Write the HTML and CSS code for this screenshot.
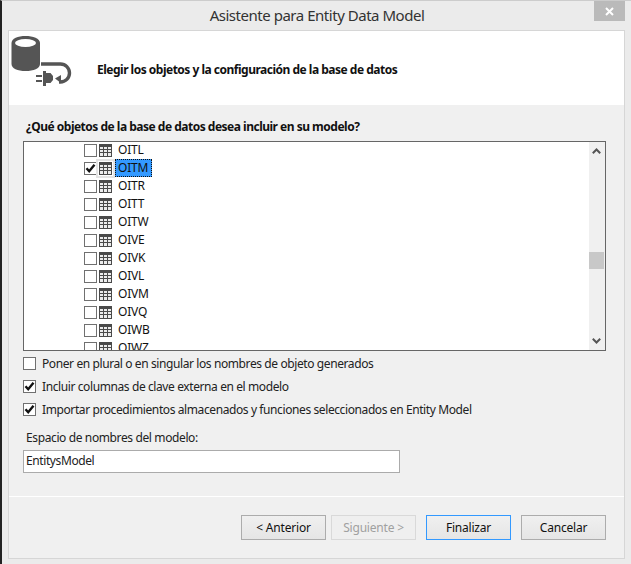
FILE: index.html
```html
<!DOCTYPE html>
<html lang="es">
<head>
<meta charset="utf-8">
<title>Asistente para Entity Data Model</title>
<link rel="stylesheet" href="styles.css">
</head>
<body>
<svg class="defs" width="0" height="0" aria-hidden="true">
  <symbol id="tbl" viewBox="0 0 13 13">
    <rect x="0" y="0" width="13" height="13" fill="#4a4a4a"/>
    <path d="M1 3h3v2H1zM5 3h3v2H5zM9 3h3v2H9zM1 6h3v2H1zM5 6h3v2H5zM9 6h3v2H9zM1 9h3v3H1zM5 9h3v3H5zM9 9h3v3H9z" fill="#ececec"/>
  </symbol>
  <symbol id="tick" viewBox="0 0 11 11">
    <path d="M1.500 5.200 4.200 8.200 9.500 1.800" fill="none" stroke="#111" stroke-width="2.400"/>
  </symbol>
</svg>
<div class="window">
  <div class="titlebar">
    <span class="title">Asistente para Entity Data Model</span>
    <div class="close"><svg width="9" height="9" viewBox="0 0 9 9"><path d="M1 1l7 7M8 1L1 8" stroke="#fff" stroke-width="2"/></svg></div>
  </div>
  <div class="frame">
    <div class="header">
      <svg class="logo" width="66" height="54" viewBox="0 0 66 54">
        <path d="M2.500 7C2.500 2.500 9 0 16.500 0S31 2.500 31 7v21c0 4.500-6.500 7-14.500 7S2.500 32.500 2.500 28z" fill="#555"/>
        <ellipse cx="16.500" cy="7" rx="10.500" ry="4" fill="#fff"/>
        <path d="M32 28h19.500a9 9 0 0 1 0 18H50" fill="none" stroke="#555" stroke-width="3.400"/>
        <path d="M46 42.500l6-3.500v8z" fill="#555"/>
        <path d="M34 35h3v2h4.500l2.500 3v4l-2.500 3H37v3h-3z" fill="#555"/>
        <path d="M27 39h6v2h-6zM27 44h6v2h-6z" fill="#555"/>
      </svg>
      <h1 class="heading">Elegir los objetos y la configuración de la base de datos</h1>
    </div>
    <div class="content">
      <p class="question">¿Qué objetos de la base de datos desea incluir en su modelo?</p>
      <div class="listbox">
        <ul class="tree">
          <li class="row"><span class="cb"></span><svg class="ti"><use href="#tbl"/></svg><span class="name">OITL</span></li>
          <li class="row"><span class="cb"><svg class="tk"><use href="#tick"/></svg></span><span class="ti-focus"><svg class="ti"><use href="#tbl"/></svg></span><span class="name selected">OITM</span></li>
          <li class="row"><span class="cb"></span><svg class="ti"><use href="#tbl"/></svg><span class="name">OITR</span></li>
          <li class="row"><span class="cb"></span><svg class="ti"><use href="#tbl"/></svg><span class="name">OITT</span></li>
          <li class="row"><span class="cb"></span><svg class="ti"><use href="#tbl"/></svg><span class="name">OITW</span></li>
          <li class="row"><span class="cb"></span><svg class="ti"><use href="#tbl"/></svg><span class="name">OIVE</span></li>
          <li class="row"><span class="cb"></span><svg class="ti"><use href="#tbl"/></svg><span class="name">OIVK</span></li>
          <li class="row"><span class="cb"></span><svg class="ti"><use href="#tbl"/></svg><span class="name">OIVL</span></li>
          <li class="row"><span class="cb"></span><svg class="ti"><use href="#tbl"/></svg><span class="name">OIVM</span></li>
          <li class="row"><span class="cb"></span><svg class="ti"><use href="#tbl"/></svg><span class="name">OIVQ</span></li>
          <li class="row"><span class="cb"></span><svg class="ti"><use href="#tbl"/></svg><span class="name">OIWB</span></li>
          <li class="row"><span class="cb"></span><svg class="ti"><use href="#tbl"/></svg><span class="name">OIWZ</span></li>
        </ul>
        <div class="scrollbar">
          <svg class="arrow-up" width="9" height="6" viewBox="0 0 9 6"><path d="M.8 5.200 4.500 1.500 8.200 5.200" fill="none" stroke="#555" stroke-width="2"/></svg>
          <div class="thumb"></div>
          <svg class="arrow-down" width="9" height="6" viewBox="0 0 9 6"><path d="M.8.800 4.500 4.500 8.200.800" fill="none" stroke="#555" stroke-width="2"/></svg>
        </div>
      </div>
      <div class="options">
        <div class="opt"><span class="box"></span><span>Poner en plural o en singular los nombres de objeto generados</span></div>
        <div class="opt"><span class="box"><svg class="tk"><use href="#tick"/></svg></span><span>Incluir columnas de clave externa en el modelo</span></div>
        <div class="opt"><span class="box"><svg class="tk"><use href="#tick"/></svg></span><span>Importar procedimientos almacenados y funciones seleccionados en Entity Model</span></div>
      </div>
      <p class="ns-label">Espacio de nombres del modelo:</p>
      <div class="input">EntitysModel</div>
    </div>
    <div class="footer">
      <div class="btn">&lt; Anterior</div>
      <div class="btn disabled">Siguiente &gt;</div>
      <div class="btn primary">Finalizar</div>
      <div class="btn">Cancelar</div>
    </div>
  </div>
</div>
</body>
</html>
```
FILE: styles.css
```css
* { box-sizing: border-box; }
html, body { margin: 0; padding: 0; }
body { font-family: "Noto Sans", "Open Sans", sans-serif; font-size: 12px; color: #111; overflow: hidden; }
.defs { position: absolute; }
.window {
  width: 631px; height: 564px; background: #ebebeb;
  border-left: 2px solid #222; border-top: 1px solid #ccc;
  display: flex; flex-direction: column; position: relative;
}
.titlebar { height: 29px; flex: none; display: flex; align-items: center; justify-content: center; padding-left: 1px; padding-bottom: 1px; }
.title { font-size: 15px; color: #333; letter-spacing: -.47px; }
.close {
  position: absolute; top: 0; left: 592px; width: 31px; height: 20px;
  background: #bababa; display: flex; align-items: center; justify-content: center;
}
.frame {
  flex: 1; margin: 0 6px 5px 6px; border: 1px solid #d6d6d6; background: #f0f0f0;
  display: flex; flex-direction: column;
}
.header { height: 74px; flex: none; background: #fff; display: flex; align-items: flex-start; position: relative; }
.logo { position: absolute; left: 0; top: 5px; }
.heading { margin: 31px 0 0 88px; font-size: 12px; font-weight: 700; line-height: 16px; color: #111; letter-spacing: -.5px; }
.content { padding: 0 14px; display: flex; flex-direction: column; align-items: flex-start; }
.question { margin: 14px 0 0 3px; height: 22px; line-height: 16px; font-weight: 700; letter-spacing: -.5px; }
.listbox {
  width: 583px; height: 210px; background: #fff; border: 1px solid #666;
  display: flex; overflow: hidden; flex: none;
}
.tree { list-style: none; margin: -1px 0 0 0; padding: 0 0 0 60px; flex: 1; min-width: 0; }
.row { height: 18px; display: flex; align-items: center; }
.cb {
  width: 13px; height: 13px; border: 1px solid #707070; background: #fff; flex: none;
  margin-right: 2px; display: flex;
}
.ti { width: 13px; height: 13px; flex: none; display: block; }
.ti-focus { display: flex; flex: none; outline: 2px solid #e4e4e4; outline-offset: 1px; }
.tk { width: 11px; height: 11px; display: block; }
.name { margin-left: 3px; padding: 0 3px; height: 18px; line-height: 18px; letter-spacing: -.2px; }
.selected { background: #3399ff; outline: 1px dotted #111; outline-offset: -1px; width: 37px; }
.scrollbar { width: 16px; flex: none; background: #f0f0f0; position: relative; }
.arrow-up { position: absolute; left: 3px; top: 6px; }
.arrow-down { position: absolute; left: 3px; bottom: 6px; }
.thumb { position: absolute; left: 0; right: 1px; top: 110px; height: 17px; background: #c8c8c8; }
.options { display: flex; flex-direction: column; gap: 5px; margin-top: 3px; }
.opt { height: 18px; display: flex; align-items: center; letter-spacing: -.4px; color: #222; }
.box {
  width: 13px; height: 13px; border: 1px solid #707070; background: #fff; flex: none;
  margin: 0 6px 0 0; display: flex;
}
.ns-label { margin: 11px 0 0 3px; height: 21px; line-height: 18px; letter-spacing: -.38px; color: #222; }
.input {
  width: 377px; height: 23px; background: #fff; border: 1px solid #ababab;
  padding-left: 2px; line-height: 20px; letter-spacing: -.4px; color: #222;
}
.footer {
  flex: 1; margin-top: 23px; border-top: 1px solid #fff;
  display: flex; align-items: flex-start; padding: 18px 0 0 232px;
}
.btn {
  width: 85px; height: 25px; border: 1px solid #acacac; background: linear-gradient(#f0f0f0, #e5e5e5);
  display: flex; align-items: center; justify-content: center; color: #111; letter-spacing: -.2px;
  margin-right: 5px;
}
.disabled { border-color: #d9d9d9; background: #efefef; color: #a0a0a0; margin-right: 10px; }
.primary { border-color: #3399ff; margin-right: 10px; }
```
